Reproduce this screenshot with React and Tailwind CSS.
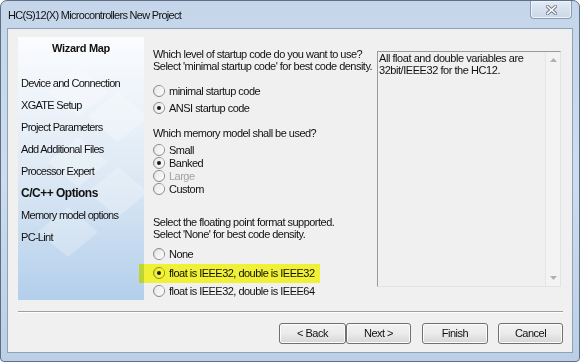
import React from 'react';

const FONT = { fontFamily: '"Liberation Sans", Arial, sans-serif' };

function Radio({ checked }) {
  return (
    <span className="relative inline-flex h-[12px] w-[12px] shrink-0 items-center justify-center rounded-full border border-[#8a8a8a] bg-gradient-to-br from-[#d8d8d8] to-[#ffffff]">
      <span className="h-[9px] w-[9px] rounded-full bg-gradient-to-br from-[#e9e9e9] to-[#fcfcfc]" />
      {checked && <span className="absolute h-[4px] w-[4px] rounded-full bg-[#1a1a1a]" />}
    </span>
  );
}

function Option({ label, checked, disabled, h }) {
  return (
    <div className={`flex items-center ${h}`}>
      <Radio checked={checked} />
      <span className={`ml-[4px] ${disabled ? 'text-[#a3a3a3]' : 'text-[#111]'}`}>{label}</span>
    </div>
  );
}

function Btn({ children, w }) {
  return (
    <button className={`${w} h-[21px] rounded-[3px] border border-[#707070] bg-gradient-to-b from-[#f2f2f2] via-[#ebebeb] to-[#d6d6d6] text-[11px] tracking-[-0.5px] text-[#111] shadow-[inset_0_0_0_1px_#fcfcfc]`}>
      {children}
    </button>
  );
}

const MAP = [
  'Device and Connection',
  'XGATE Setup',
  'Project Parameters',
  'Add Additional Files',
  'Processor Expert',
  'C/C++ Options',
  'Memory model options',
  'PC-Lint',
];

export default function App() {
  return (
    <div style={FONT} className="relative h-[362px] w-[580px] overflow-hidden bg-white">
      <div className="flex h-[362px] w-[580px] flex-col rounded-t-[7px] rounded-b-[4px] border border-[#5d6f85] bg-gradient-to-b from-[#c5d6ea] via-[#cddcee] to-[#bccfe6]">
        {/* title bar */}
        <div className="flex h-[27px] items-start justify-between">
          <div className="ml-[7px] mt-[7px] text-[11px] leading-[14px] tracking-[-0.7px] text-[#111]">
            HC(S)12(X) Microcontrollers New Project
          </div>
          <div className="mr-[7px] flex h-[18px] w-[42px] items-center justify-center rounded-b-[4px] border border-t-0 border-[#8a9cb3] bg-gradient-to-b from-[#e3ebf5] to-[#c9d7e8] shadow-[inset_0_0_0_1px_#eef3f9]">
            <svg width="11" height="10" viewBox="0 0 11 10">
              <path d="M1.5 1.5 L9.5 8.5 M9.5 1.5 L1.5 8.5" stroke="#6a7486" strokeWidth="3.4" strokeLinecap="square" />
              <path d="M1.5 1.5 L9.5 8.5 M9.5 1.5 L1.5 8.5" stroke="#ffffff" strokeWidth="1.6" strokeLinecap="square" />
            </svg>
          </div>
        </div>

        {/* client area */}
        <div className="mx-[6px] mb-[8px] flex flex-1 flex-col border border-[#8fa2b9] bg-[#f0f0f0] pl-[10px] pr-[9px] pt-[8px] text-[11px] tracking-[-0.52px]">
          <div className="flex">
            {/* wizard map */}
            <div className="relative h-[263px] w-[126px] overflow-hidden bg-gradient-to-b from-[#fbfcfe] via-[#dfeaf5] to-[#b3cfeb]">
              <svg className="absolute inset-0" width="126" height="263" viewBox="0 0 126 263">
                <g fill="#ffffff" opacity="0.25">
                  <path d="M60 30 L90 55 L60 80 L30 55 Z" />
                  <path d="M100 55 L130 80 L100 105 L70 80 Z" />
                  <path d="M60 100 L90 125 L60 150 L30 125 Z" />
                  <path d="M100 130 L130 155 L100 180 L70 155 Z" />
                  <path d="M50 170 L80 195 L50 220 L20 195 Z" />
                </g>
              </svg>
              <div className="relative tracking-[-0.7px]">
                <div className="flex h-[22px] items-center justify-center text-[11px] font-bold tracking-[-0.3px] text-[#111]">Wizard Map</div>
                <div className="mt-[13px] pl-[3px]">
                  {MAP.map((m) => (
                    <div key={m} className={`flex h-[22px] items-center ${m === 'C/C++ Options' ? 'text-[12px] font-bold tracking-[-0.5px]' : ''} text-[#111]`}>
                      {m}
                    </div>
                  ))}
                </div>
              </div>
            </div>

            {/* options */}
            <div className="ml-[9px] w-[224px] pt-[11px] leading-[12px] text-[#111]">
              <div className="whitespace-nowrap">Which level of startup code do you want to use?</div>
              <div className="whitespace-nowrap">Select 'minimal startup code' for best code density.</div>
              <div className="mt-[10px]">
                <Option h="h-[17px]" label="minimal startup code" />
                <Option h="h-[17px]" label="ANSI startup code" checked />
              </div>
              <div className="mt-[11px]">Which memory model shall be used?</div>
              <div className="mt-[4px]">
                <Option h="h-[13px]" label="Small" />
                <Option h="h-[13px]" label="Banked" checked />
                <Option h="h-[13px]" label="Large" disabled />
                <Option h="h-[13px]" label="Custom" />
              </div>
              <div className="mt-[21px]">Select the floating point format supported.</div>
              <div>Select 'None' for best code density.</div>
              <div className="mt-[5px]">
                <Option h="h-[18px]" label="None" />
                <Option h="h-[19px]" label="float is IEEE32, double is IEEE32" checked />
                <Option h="h-[17px]" label="float is IEEE32, double is IEEE64" />
              </div>
            </div>

            {/* info box */}
            <div className="mt-[14px] flex h-[236px] w-[184px] border border-b-[#e3e3e3] border-l-[#9a9a9a] border-r-[#e3e3e3] border-t-[#9a9a9a] bg-[#f0f0f0]">
              <div className="flex-1 pl-[1px] leading-[12px] tracking-[-0.45px] text-[#111]">
                All float and double variables are 32bit/IEEE32 for the HC12.
              </div>
              <div className="flex w-[15px] flex-col items-center justify-between border-l border-[#e6e6e6] bg-[#f3f3f3] py-[6px]">
                <svg width="7" height="4" viewBox="0 0 7 4"><path d="M3.5 0 L7 4 L0 4 Z" fill="#b0b0b0" /></svg>
                <svg width="7" height="4" viewBox="0 0 7 4"><path d="M0 0 L7 0 L3.5 4 Z" fill="#b0b0b0" /></svg>
              </div>
            </div>
          </div>

          {/* separator */}
          <div className="mt-[11px] h-[2px] border-t border-b border-t-[#a0a0a0] border-b-white" />

          {/* buttons */}
          <div className="mt-[10px] flex justify-end">
            <Btn w="w-[67px]">&lt; Back</Btn>
            <Btn w="w-[65px]">Next &gt;</Btn>
            <div className="w-[11px]" />
            <Btn w="w-[66px]">Finish</Btn>
            <div className="w-[10px]" />
            <Btn w="w-[65px]">Cancel</Btn>
          </div>
        </div>
      </div>

      {/* highlighter mark */}
      <div className="pointer-events-none absolute left-[139px] top-[264px] h-[19px] w-[181px] bg-[#ffff3a] mix-blend-multiply" />
    </div>
  );
}
